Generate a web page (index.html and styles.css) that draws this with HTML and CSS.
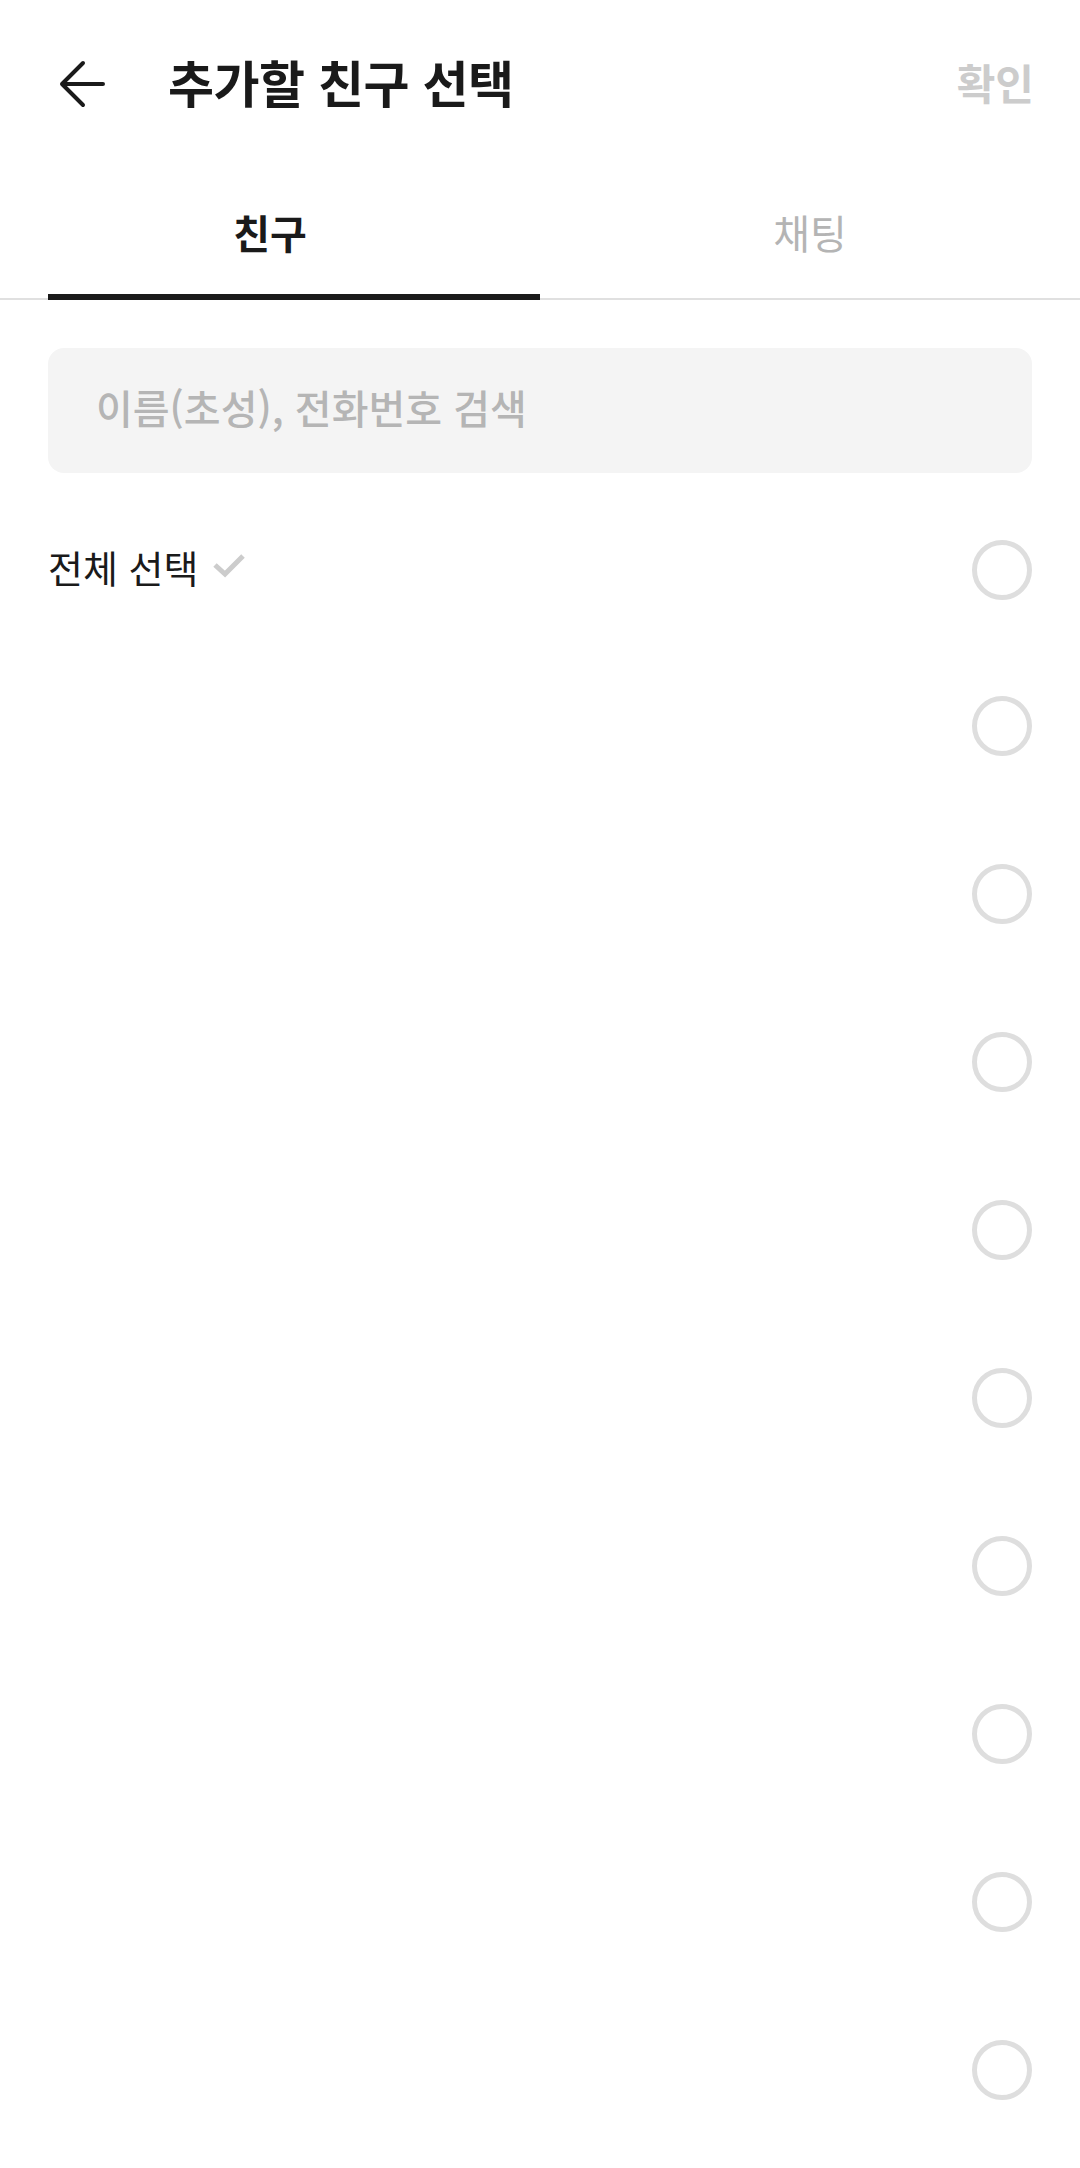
FILE: index.html
```html
<!DOCTYPE html>
<html lang="ko">
<head>
    <meta charset="utf-8" />
    <title>추가할 친구 선택</title>
    <link rel="stylesheet" href="styles.css">
</head>
<body>
    <div class="topbar">
        <a class="back" href="#">
            <svg width="52" height="52" viewBox="0 0 52 52">
                <path d="M47 24 H6 M27 3 L6 24 L27 45" fill="none" stroke="#1a1a1a" stroke-width="4" stroke-linecap="round" stroke-linejoin="round"/>
            </svg>
        </a>
        <div class="title">추가할 친구 선택</div>
        <a class="confirm" href="#">확인</a>
    </div>

    <div class="tabs">
        <div class="tab active"><span class="tab-label">친구</span></div>
        <div class="tab"><span class="tab-label">채팅</span></div>
    </div>

    <div class="search">
        <input type="text" placeholder="이름(초성), 전화번호 검색">
    </div>

    <div class="list">
        <div class="row first">
            <div class="select-all">
                전체 선택
                <svg width="36" height="28" viewBox="0 0 36 28">
                    <path d="M3 13 L13 22 L31 4" fill="none" stroke="#cccccc" stroke-width="5"/>
                </svg>
            </div>
            <span class="radio"></span>
        </div>
        <div class="row"><span class="radio"></span></div>
        <div class="row"><span class="radio"></span></div>
        <div class="row"><span class="radio"></span></div>
        <div class="row"><span class="radio"></span></div>
        <div class="row"><span class="radio"></span></div>
        <div class="row"><span class="radio"></span></div>
        <div class="row"><span class="radio"></span></div>
        <div class="row"><span class="radio"></span></div>
        <div class="row"><span class="radio"></span></div>
    </div>
</body>
</html>
```

FILE: styles.css
```css
body {
  margin: 0;
  background-color: white;
  font-family: "Noto Sans CJK KR", "Noto Sans", sans-serif;
  color: #1a1a1a;
  overflow: hidden;
}

.topbar {
  display: flex;
  align-items: center;
  height: 172px;
  padding: 0 46px 0 56px;
}

.topbar .back {
  display: block;
  width: 52px;
  height: 52px;
}

.topbar .back svg {
  display: block;
}

.topbar .title {
  flex: 1;
  margin-left: 60px;
  margin-bottom: 10px;
  font-size: 50px;
  font-weight: bold;
  letter-spacing: -0.5px;
}

.topbar .confirm {
  margin-bottom: 10px;
  color: #cccccc;
  font-size: 42px;
  font-weight: bold;
  text-decoration: none;
}

.tabs {
  display: flex;
  border-bottom: 2px solid #e0e0e0;
}

.tab {
  flex: 1;
  display: flex;
  flex-direction: column;
  align-items: center;
}

.tab-label {
  height: 122px;
  line-height: 120px;
  font-size: 40px;
  color: #b4b4b4;
}

.tab::after {
  content: "";
  align-self: stretch;
  height: 6px;
  margin-bottom: -2px;
}

.tab.active .tab-label {
  color: #1a1a1a;
  font-weight: bold;
}

.tab.active::after {
  margin-left: 48px;
  background-color: #1a1a1a;
}

.search {
  margin: 48px 48px 25px;
  height: 125px;
  border-radius: 16px;
  background-color: #f4f4f4;
  display: flex;
  align-items: center;
}

.search input {
  flex: 1;
  border: none;
  background: transparent;
  outline: none;
  padding: 0 48px 8px;
  font-family: "Noto Sans CJK KR", "Noto Sans", sans-serif;
  font-size: 40px;
  font-weight: 500;
}

.search input::placeholder {
  color: #b5b5b5;
}

.row {
  display: flex;
  align-items: center;
  justify-content: flex-end;
  height: 168px;
  padding: 0 48px;
}

.row.first {
  height: 144px;
  justify-content: space-between;
}

.select-all {
  display: flex;
  align-items: center;
  margin-bottom: 8px;
  font-size: 38px;
  gap: 14px;
}

.select-all svg {
  display: block;
}

.radio {
  width: 50px;
  height: 50px;
  border: 5px solid #dedede;
  border-radius: 50%;
}
```
